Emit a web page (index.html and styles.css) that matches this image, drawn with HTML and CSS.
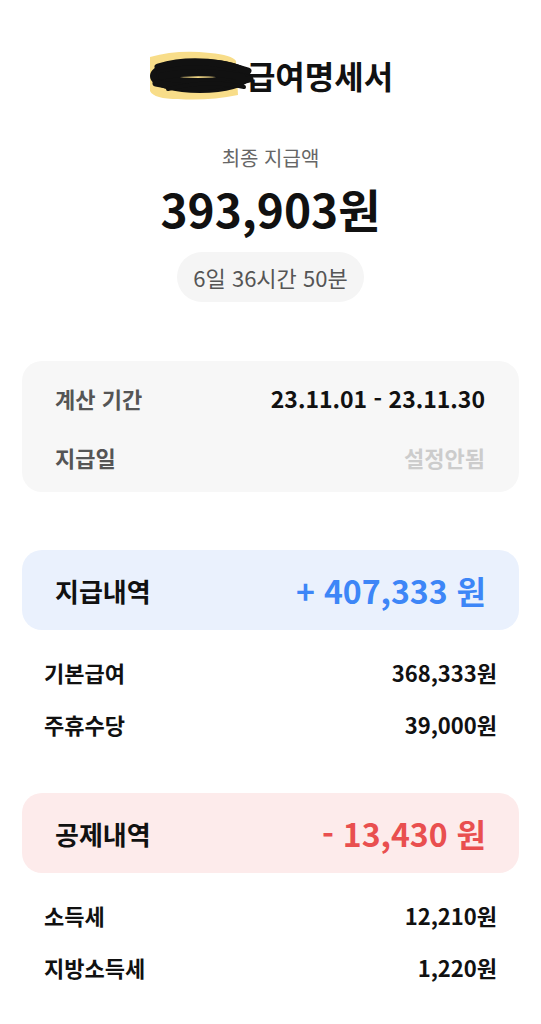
FILE: index.html
```html
<!DOCTYPE html>
<html lang="ko">
<head>
    <meta charset="UTF-8">
    <meta name="viewport" content="width=device-width, initial-scale=1.0">
    <title>급여명세서</title>
    <link rel="stylesheet" href="styles.css">
</head>
<body>
    <div class="payslip">
        <header class="title">
            <svg class="redacted" width="108" height="52" viewBox="0 0 108 52" aria-hidden="true">
                <path d="M2 8 Q30 0 62 4 Q84 6 88 12 L90 46 Q60 52 30 50 Q6 50 2 42 Z" fill="#f7d774" opacity="0.85"/>
                <g fill="none" stroke="#111" stroke-linecap="round">
                    <ellipse cx="52" cy="27" rx="46" ry="13" stroke-width="8"/>
                    <ellipse cx="50" cy="25" rx="38" ry="8" stroke-width="8"/>
                    <path d="M10 18 Q52 6 100 22 M8 34 Q52 44 102 30 M14 27 Q52 20 94 28" stroke-width="7"/>
                    <path d="M20 40 Q60 30 96 38" stroke-width="4"/>
                </g>
            </svg>
            <h1>급여명세서</h1>
        </header>

        <section class="summary">
            <p class="summary-label">최종 지급액</p>
            <p class="summary-amount">393,903원</p>
            <span class="work-time">6일 36시간 50분</span>
        </section>

        <section class="info-card">
            <div class="info-row">
                <span class="info-label">계산 기간</span>
                <span class="info-value">23.11.01 - 23.11.30</span>
            </div>
            <div class="info-row">
                <span class="info-label">지급일</span>
                <span class="info-value empty">설정안됨</span>
            </div>
        </section>

        <section class="group">
            <div class="group-head pay">
                <span>지급내역</span>
                <span class="group-total">+ 407,333 원</span>
            </div>
            <ul class="items">
                <li><span>기본급여</span><span>368,333원</span></li>
                <li><span>주휴수당</span><span>39,000원</span></li>
            </ul>
        </section>

        <section class="group">
            <div class="group-head deduct">
                <span>공제내역</span>
                <span class="group-total">- 13,430 원</span>
            </div>
            <ul class="items">
                <li><span>소득세</span><span>12,210원</span></li>
                <li><span>지방소득세</span><span>1,220원</span></li>
            </ul>
        </section>
    </div>
</body>
</html>
```

FILE: styles.css
```css
:root {
    --text-color: #111;
    --sub-text: #666;
    --light-bg: #f7f7f7;
    --pay-bg: #eaf1fd;
    --pay-color: #3d86f7;
    --deduct-bg: #fdebeb;
    --deduct-color: #e94f4f;
}

* {
    margin: 0;
    padding: 0;
    box-sizing: border-box;
    font-family: "Noto Sans CJK KR", "Noto Sans", sans-serif;
}

body {
    background-color: white;
    color: var(--text-color);
}

.payslip {
    width: 541px;
    padding: 55px 22px 40px;
}

.title {
    display: flex;
    justify-content: center;
    align-items: center;
    height: 40px;
}

.redacted {
    margin-right: -10px;
    position: relative;
    z-index: 1;
}

.title h1 {
    font-size: 32px;
    font-weight: 700;
    line-height: 40px;
}

.summary {
    display: flex;
    flex-direction: column;
    align-items: center;
    margin-top: 51px;
}

.summary-label {
    font-size: 20px;
    line-height: 24px;
    color: var(--sub-text);
}

.summary-amount {
    font-size: 46px;
    font-weight: 700;
    line-height: 52px;
    margin-top: 12px;
}

.work-time {
    margin-top: 18px;
    height: 50px;
    line-height: 50px;
    padding: 0 16px;
    border-radius: 25px;
    background-color: #f5f5f5;
    color: #555;
    font-size: 22px;
}

.info-card {
    margin-top: 59px;
    background-color: var(--light-bg);
    border-radius: 20px;
    padding: 24px 34px 22px 33px;
    display: flex;
    flex-direction: column;
    gap: 33px;
}

.info-row {
    display: flex;
    justify-content: space-between;
    align-items: center;
    line-height: 26px;
    font-size: 22px;
    font-weight: 700;
}

.info-label {
    color: #555;
}

.info-value {
    font-size: 23px;
}

.info-value.empty {
    font-size: 22px;
    color: #ccc;
}

.group {
    margin-top: 58px;
}

.group + .group {
    margin-top: 56px;
}

.group-head {
    height: 80px;
    border-radius: 20px;
    padding: 0 33px;
    display: flex;
    justify-content: space-between;
    align-items: center;
    font-size: 26px;
    font-weight: 700;
}

.group-head .group-total {
    font-size: 32px;
}

.group-head.pay {
    background-color: var(--pay-bg);
}

.group-head.pay .group-total {
    color: var(--pay-color);
}

.group-head.deduct {
    background-color: var(--deduct-bg);
}

.group-head.deduct .group-total {
    color: var(--deduct-color);
}

.items {
    list-style: none;
    padding: 29px 22px 0;
    display: flex;
    flex-direction: column;
    gap: 26px;
}

.items li {
    display: flex;
    justify-content: space-between;
    font-size: 22px;
    font-weight: 700;
    line-height: 26px;
}
```
